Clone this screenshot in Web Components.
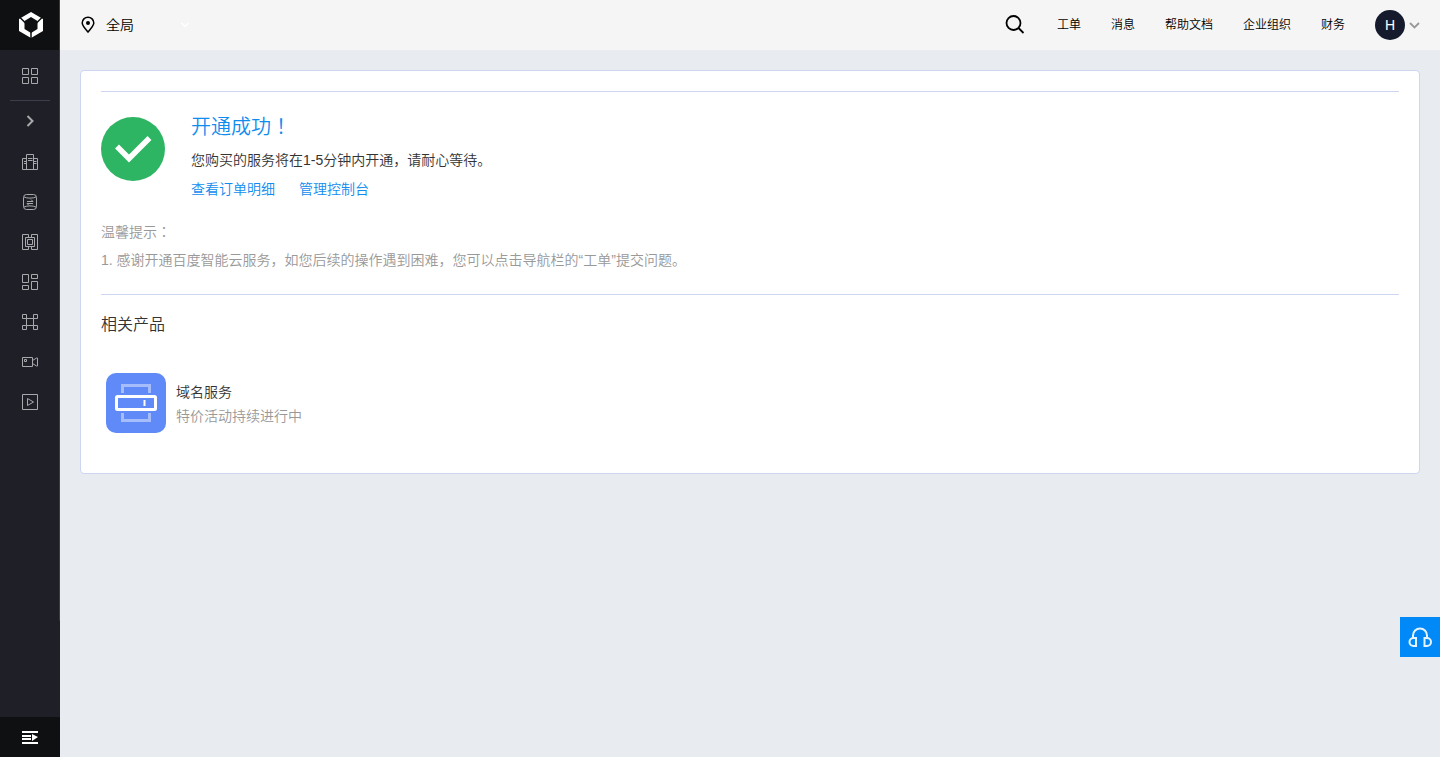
<!DOCTYPE html>
<html lang="zh-CN">
<head>
<meta charset="utf-8">
<title>开通成功</title>
<style>
  html, body { margin: 0; height: 100%; }
  body {
    font-family: "Liberation Sans", "Noto Sans CJK SC", sans-serif;
    font-size: 14px;
    font-weight: 350;
    line-height: 20px;
    color: #333;
    background: #e8ebf0;
  }
</style>
</head>
<body>
<console-app></console-app>
<script>
const define = (name, html, setup) => {
  const template = document.createElement('template');
  template.innerHTML = html;
  customElements.define(name, class extends HTMLElement {
    constructor() {
      super();
      this.attachShadow({ mode: 'open' }).append(template.content.cloneNode(true));
    }
    connectedCallback() { if (setup) setup(this); }
  });
};

const icons = {
  overview: '<path d="M.5.5h6v6h-6zM9.500.5h6v6h-6zM.5 9.500h6v6h-6zM9.500 9.500h6v6h-6z"/>',
  expand: '<path stroke-width="2" d="M5.500 3l5 5-5 5"/>',
  building: '<path d="M4.500 15.500V.5h7v15zM4.500 4.500h-4v11h15v-11h-4M6 4.500h4.500M6 6.500h4.500M2 7.500h2.500M2 9.500h2.500M12 7.500h2.500M12 9.500h2.500"/>',
  storage: '<rect x="1.500" y=".5" width="13" height="15" rx="3"/><path d="M2 3c3 1.500 9 1.500 12 0M2 13c3-1.500 9-1.500 12 0M5 7.500h6L9 5.500M11 9.500H5l2 2"/>',
  network: '<path d="M6.500.5h-6v15h6M9.500.5h6v15h-6M6.500.5v3M9.500.5v3M6.500 15.500v-3M9.500 15.500v-3M3.500 3.500h9v9h-9zM5.500 5.500h5v5h-5z"/>',
  blocks: '<path d="M.5.5h6v8h-6zM.5 11.500h6v4h-6zM9.500.5h6v4h-6zM9.500 7.500h6v8h-6z"/>',
  nodes: '<path d="M.5.5h4v4h-4zM11.500.5h4v4h-4zM.5 11.500h4v4h-4zM11.500 11.500h4v4h-4zM4.500 4.500h7M4.500 11.500h7M4.500 4.500v7M11.500 4.500v7"/>',
  video: '<path d="M.5 3.500h10v9H.5zM10.500 6.500l4-2.500h1v8h-1l-4-2.500"/><path d="M2.500 5.500h2v2h-2z"/>',
  play: '<path d="M.5.5h15v15H.5zM5.500 4.500l6 3.500-6 3.500z"/>'
};

define('side-item', `
<style>
  :host { display: block; height: 40px; }
  a { display: flex; height: 100%; align-items: center; justify-content: center; color: #a8a8ad; }
  svg { width: 16px; height: 16px; fill: none; stroke: currentColor; }
</style>
<a href="#"><svg viewBox="0 0 16 16" aria-hidden="true"></svg></a>`, el => {
  el.shadowRoot.querySelector('a').setAttribute('aria-label', el.getAttribute('label'));
  el.shadowRoot.querySelector('svg').innerHTML = icons[el.getAttribute('icon')];
});

define('side-bar', `
<style>
  :host { display: flex; flex-direction: column; background: linear-gradient(#3a3a42, #3a3a42) top right / 1px 82% no-repeat #1f1f28; }
  .logo { display: flex; height: 50px; margin-right: 1px; align-items: center; justify-content: center; background: #0f1011; }
  nav { flex: 1; padding-top: 6px; }
  hr { width: 40px; height: 1px; margin: 4px auto 0; border: 0; background: #3d3d4c; }
  .group { padding-top: 1px; }
  button { display: flex; height: 40px; padding: 0; border: 0; align-items: center; justify-content: center; background: #0f1011; }
</style>
<a class="logo" href="#" aria-label="首页">
  <svg width="27" height="26" viewBox="0 0 27 26">
    <path fill="#fff" fill-rule="evenodd" d="M15 0 27 7V19L15 26 3 19V7zM15 5 21.500 9V17L15 21 8.500 17V9z"/>
    <path stroke="#0f1011" stroke-width="1.500" d="M15 20v6M3.500 5l6 6M26.500 5l-6 6"/>
  </svg>
</a>
<nav>
  <side-item icon="overview" label="总览"></side-item>
  <hr>
  <side-item icon="expand" label="展开"></side-item>
  <div class="group">
    <side-item icon="building" label="企业"></side-item>
    <side-item icon="storage" label="存储"></side-item>
    <side-item icon="network" label="网络"></side-item>
    <side-item icon="blocks" label="组件"></side-item>
    <side-item icon="nodes" label="节点"></side-item>
    <side-item icon="video" label="视频"></side-item>
    <side-item icon="play" label="播放"></side-item>
  </div>
</nav>
<button type="button" aria-label="展开菜单">
  <svg width="16" height="14" viewBox="0 0 16 14" fill="#fff"><path d="M0 1h16v2H0zM0 5h9v2H0zM0 8h9v2H0zM0 12h16v2H0zM10 4l6 3-6 4z"/></svg>
</button>`);

define('top-bar', `
<style>
  :host { display: flex; height: 50px; align-items: center; justify-content: space-between; padding: 0 20px; background: #f5f5f5; color: #000; }
  button { display: flex; align-items: center; padding: 0; border: 0; background: none; font: inherit; color: inherit; }
  .region { gap: 10px; }
  .region .arrow { margin-left: 36px; }
  .right, nav { display: flex; align-items: center; }
  nav { gap: 30px; margin: 0 30px 0 32px; font-size: 12px; }
  a { color: inherit; text-decoration: none; }
  .user { gap: 4px; }
  .avatar { width: 30px; border-radius: 50%; line-height: 30px; background: #151b2c; color: #fff; text-align: center; font-size: 14px; }
</style>
<button class="region" type="button">
  <svg width="16" height="18" viewBox="0 0 16 18" fill="none" stroke="#000" stroke-width="1.500"><path d="M8 16C4.500 12 2.200 9.500 2.200 7a5.800 5.800 0 0 1 11.600 0C13.800 9.500 11.500 12 8 16z"/><circle cx="8" cy="7" r="2" fill="#000" stroke="none"/></svg>
  <span>全局</span>
  <svg class="arrow" width="10" height="6" viewBox="0 0 10 6" fill="none" stroke="#fff" stroke-width="1.500"><path d="M1.500 1l3.500 3.500L8.500 1"/></svg>
</button>
<div class="right">
  <button type="button" aria-label="搜索"><svg width="20" height="20" viewBox="0 0 20 20" fill="none" stroke="#000" stroke-width="1.800"><circle cx="8.500" cy="8" r="7"/><path d="M13.500 13l5 5"/></svg></button>
  <nav>
    <a href="#">工单</a><a href="#">消息</a><a href="#">帮助文档</a><a href="#">企业组织</a><a href="#">财务</a>
  </nav>
  <button class="user" type="button"><span class="avatar">H</span><svg width="11" height="8" viewBox="0 0 11 8" fill="none" stroke="#999" stroke-width="1.800"><path d="M1 2l4.500 4.500L10 2"/></svg></button>
</div>`);

define('result-panel', `
<style>
  :host { display: flex; gap: 26px; border-top: 1px solid #ccd6f0; padding-top: 20px; }
  svg { flex: none; margin-top: 5px; }
  h1 { margin: 0; font-size: 20px; line-height: 28px; font-weight: inherit; color: #108cee; }
  h1 span { font-family: "Noto Sans CJK TC", sans-serif; }
  p { margin: 9px 0; }
  .links { display: flex; gap: 24px; }
  ::slotted(a) { color: #108cee; text-decoration: none; }
</style>
<svg width="64" height="64" viewBox="0 0 64 64" aria-hidden="true"><circle cx="32" cy="32" r="32" fill="#2eb564"/><path d="M16 29.500 28 41.500 48.500 21" fill="none" stroke="#fff" stroke-width="5.500"/></svg>
<div>
  <h1><slot name="title"></slot><span lang="zh-TW">！</span></h1>
  <p><slot name="message"></slot></p>
  <div class="links"><slot></slot></div>
</div>`);

define('tip-list', `
<style>
  :host { display: block; margin-top: 23px; padding-bottom: 24px; border-bottom: 1px solid #ccd6f0; color: #999; }
  span { font-family: "Noto Sans CJK TC", sans-serif; line-height: 1; }
  p { margin: 0 0 8px; }
  p + p { margin: 0; }
</style>
<p>温馨提示<span lang="zh-TW">：</span></p>
<p><slot></slot></p>`);

define('product-card', `
<style>
  :host { display: flex; }
  a { display: flex; gap: 10px; align-items: center; color: #333; text-decoration: none; }
  .text { display: grid; gap: 4px; padding-top: 2px; }
  .note { color: #999; }
</style>
<a href="#">
  <svg width="60" height="60" viewBox="0 0 60 60" fill="none" aria-hidden="true">
    <rect width="60" height="60" rx="10" fill="#5f8af7"/>
    <path d="M16.500 20v-7.500h27V20M16.500 40v7.500h27V40" stroke="#a6bdfb" stroke-width="3"/>
    <rect x="10.500" y="23.500" width="39" height="13" stroke="#fff" stroke-width="3" rx="1"/>
    <path d="M38.500 27v6" stroke="#fff" stroke-width="2"/>
  </svg>
  <span class="text"><slot name="name"></slot><span class="note"><slot name="note"></slot></span></span>
</a>`);

define('content-card', `
<style>
  :host { display: block; margin: 20px; padding: 20px 20px 40px; border: 1px solid #ccd6f0; border-radius: 4px; background: #fff; }
  h2 { margin: 18px 0 36px; font-size: 16px; line-height: 24px; font-weight: inherit; }
  product-card { margin-left: 5px; }
</style>
<result-panel>
  <span slot="title">开通成功</span>
  <span slot="message">您购买的服务将在1-5分钟内开通，请耐心等待。</span>
  <a href="#">查看订单明细</a>
  <a href="#">管理控制台</a>
</result-panel>
<tip-list>1. 感谢开通百度智能云服务，如您后续的操作遇到困难，您可以点击导航栏的“工单”提交问题。</tip-list>
<h2>相关产品</h2>
<product-card><span slot="name">域名服务</span><span slot="note">特价活动持续进行中</span></product-card>`);

define('help-button', `
<style>
  :host { position: fixed; right: 0; bottom: 100px; }
  button { display: flex; width: 40px; height: 40px; padding: 0; border: 0; align-items: center; justify-content: center; background: #0089f7; }
</style>
<button type="button" aria-label="客服">
  <svg width="26" height="22" viewBox="0 0 26 22" fill="none" stroke="#e6f4ff" stroke-width="2"><path d="M6 12V9.500a7 7 0 0 1 14 0V12M9 12v8H6.500a4 4 0 0 1 0-8zM17.500 12v8H20a4 4 0 0 0 0-8z"/></svg>
</button>`);

define('console-app', `
<style>
  :host { display: grid; min-height: 100vh; grid-template-columns: 60px 1fr; }
  main { min-width: 0; }
</style>
<side-bar></side-bar>
<div>
  <top-bar></top-bar>
  <main><content-card></content-card></main>
</div>
<help-button></help-button>`);
</script>
</body>
</html>
